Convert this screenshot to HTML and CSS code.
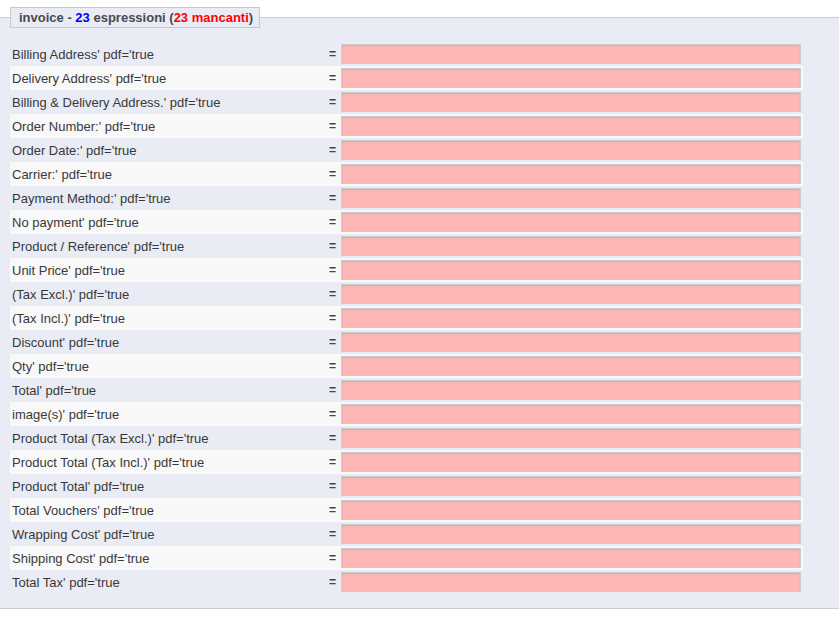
FILE: index.html
```html
<!DOCTYPE html>
<html>
<head>
<meta charset="utf-8">
<link rel="stylesheet" href="styles.css">
</head>
<body>
<fieldset class="box">
  <legend class="box-title">invoice - <span class="num">23</span> espressioni (<span class="miss">23 mancanti</span>)</legend>
  <div class="rows">
    <div class="row"><span class="lbl">Billing Address' pdf='true</span><span class="eq">=</span><span class="fld"><span class="inp"></span></span></div>
    <div class="row alt"><span class="lbl">Delivery Address' pdf='true</span><span class="eq">=</span><span class="fld"><span class="inp"></span></span></div>
    <div class="row"><span class="lbl">Billing &amp; Delivery Address.' pdf='true</span><span class="eq">=</span><span class="fld"><span class="inp"></span></span></div>
    <div class="row alt"><span class="lbl">Order Number:' pdf='true</span><span class="eq">=</span><span class="fld"><span class="inp"></span></span></div>
    <div class="row"><span class="lbl">Order Date:' pdf='true</span><span class="eq">=</span><span class="fld"><span class="inp"></span></span></div>
    <div class="row alt"><span class="lbl">Carrier:' pdf='true</span><span class="eq">=</span><span class="fld"><span class="inp"></span></span></div>
    <div class="row"><span class="lbl">Payment Method:' pdf='true</span><span class="eq">=</span><span class="fld"><span class="inp"></span></span></div>
    <div class="row alt"><span class="lbl">No payment' pdf='true</span><span class="eq">=</span><span class="fld"><span class="inp"></span></span></div>
    <div class="row"><span class="lbl">Product / Reference' pdf='true</span><span class="eq">=</span><span class="fld"><span class="inp"></span></span></div>
    <div class="row alt"><span class="lbl">Unit Price' pdf='true</span><span class="eq">=</span><span class="fld"><span class="inp"></span></span></div>
    <div class="row"><span class="lbl">(Tax Excl.)' pdf='true</span><span class="eq">=</span><span class="fld"><span class="inp"></span></span></div>
    <div class="row alt"><span class="lbl">(Tax Incl.)' pdf='true</span><span class="eq">=</span><span class="fld"><span class="inp"></span></span></div>
    <div class="row"><span class="lbl">Discount' pdf='true</span><span class="eq">=</span><span class="fld"><span class="inp"></span></span></div>
    <div class="row alt"><span class="lbl">Qty' pdf='true</span><span class="eq">=</span><span class="fld"><span class="inp"></span></span></div>
    <div class="row"><span class="lbl">Total' pdf='true</span><span class="eq">=</span><span class="fld"><span class="inp"></span></span></div>
    <div class="row alt"><span class="lbl">image(s)' pdf='true</span><span class="eq">=</span><span class="fld"><span class="inp"></span></span></div>
    <div class="row"><span class="lbl">Product Total (Tax Excl.)' pdf='true</span><span class="eq">=</span><span class="fld"><span class="inp"></span></span></div>
    <div class="row alt"><span class="lbl">Product Total (Tax Incl.)' pdf='true</span><span class="eq">=</span><span class="fld"><span class="inp"></span></span></div>
    <div class="row"><span class="lbl">Product Total' pdf='true</span><span class="eq">=</span><span class="fld"><span class="inp"></span></span></div>
    <div class="row alt"><span class="lbl">Total Vouchers' pdf='true</span><span class="eq">=</span><span class="fld"><span class="inp"></span></span></div>
    <div class="row"><span class="lbl">Wrapping Cost' pdf='true</span><span class="eq">=</span><span class="fld"><span class="inp"></span></span></div>
    <div class="row alt"><span class="lbl">Shipping Cost' pdf='true</span><span class="eq">=</span><span class="fld"><span class="inp"></span></span></div>
    <div class="row"><span class="lbl">Total Tax' pdf='true</span><span class="eq">=</span><span class="fld"><span class="inp"></span></span></div>
  </div>
</fieldset>
</body>
</html>
```
FILE: styles.css
```css
html, body {
  margin: 0;
  padding: 0;
  background: #ffffff;
}
body {
  font-family: "Liberation Sans", Arial, Helvetica, sans-serif;
  font-size: 13px;
  color: #333333;
}
.box {
  margin: 7px 0 0 0;
  padding: 14px 0 14px 10px;
  border: none;
  border-top: 1px solid #c9cbd5;
  border-bottom: 1px solid #c9cbd5;
  background: #e9ecf4;
  min-width: 0;
}
.box-title {
  margin: 0;
  padding: 0 6px 0 8px;
  height: 19px;
  line-height: 19px;
  border: 1px solid #c6c8d2;
  background: #e9ecf4;
  font-size: 13px;
  font-weight: bold;
  color: #474a52;
}
.num { color: #0000ff; }
.miss { color: #ff0000; }
.rows {
  width: 793px;
  display: flex;
  flex-direction: column;
}
.row {
  display: grid;
  grid-template-columns: 319px 12px 460px;
  padding-right: 2px;
  height: 24px;
  align-items: center;
}
.row.alt { background: #f8f8f8; }
.lbl {
  padding-left: 2px;
  color: #383838;
  white-space: nowrap;
}
.eq {
  color: #444;
  font-weight: bold;
  font-size: 12px;
}
.fld { display: flex; }
.inp {
  display: block;
  width: 460px;
  height: 20px;
  box-sizing: border-box;
  border: 1px solid #cccccc;
  background: #ffb6b6;
  box-shadow: inset 0 1px 2px rgba(0, 0, 0, 0.1);
}
```
